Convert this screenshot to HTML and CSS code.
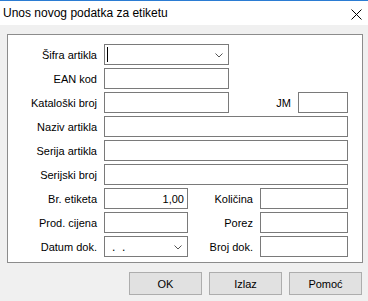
FILE: index.html
```html
<!DOCTYPE html>
<html>
<head>
<meta charset="utf-8">
<link rel="stylesheet" href="styles.css">
</head>
<body>
<div class="window">
  <div class="titlebar">
    <span class="title">Unos novog podatka za etiketu</span>
    <svg class="close" width="11" height="11" viewBox="0 0 11 11"><path d="M0.5 0.5 L10.5 10.5 M10.5 0.5 L0.5 10.5" stroke="#000" stroke-width="1"/></svg>
  </div>
  <div class="content">
    <div class="group">
      <div class="row">
        <label class="lbl">Šifra artikla</label>
        <div class="field w-combo combo"><span class="caret"></span>
          <svg class="chev" width="8" height="5" viewBox="0 0 8 5"><path d="M0.5 0.5 L4 4 L7.5 0.5" fill="none" stroke="#555" stroke-width="1"/></svg>
        </div>
      </div>
      <div class="row">
        <label class="lbl">EAN kod</label>
        <div class="field w-combo"></div>
      </div>
      <div class="row">
        <label class="lbl">Kataloški broj</label>
        <div class="field w-combo"></div>
        <label class="lbl2 l-jm">JM</label>
        <div class="field w-jm"></div>
      </div>
      <div class="row">
        <label class="lbl">Naziv artikla</label>
        <div class="field w-long"></div>
      </div>
      <div class="row">
        <label class="lbl">Serija artikla</label>
        <div class="field w-long"></div>
      </div>
      <div class="row">
        <label class="lbl">Serijski broj</label>
        <div class="field w-long"></div>
      </div>
      <div class="row">
        <label class="lbl">Br. etiketa</label>
        <div class="field w-short num">1,00</div>
        <label class="lbl2 l-mid">Količina</label>
        <div class="field w-mid"></div>
      </div>
      <div class="row">
        <label class="lbl">Prod. cijena</label>
        <div class="field w-short"></div>
        <label class="lbl2 l-mid">Porez</label>
        <div class="field w-mid"></div>
      </div>
      <div class="row">
        <label class="lbl">Datum dok.</label>
        <div class="field w-short combo date"><span class="dots">.&nbsp;&nbsp;.</span>
          <svg class="chev" width="8" height="5" viewBox="0 0 8 5"><path d="M0.5 0.5 L4 4 L7.5 0.5" fill="none" stroke="#555" stroke-width="1"/></svg>
        </div>
        <label class="lbl2 l-mid">Broj dok.</label>
        <div class="field w-mid"></div>
      </div>
    </div>
    <div class="buttons">
      <button class="btn">OK</button>
      <button class="btn">Izlaz</button>
      <button class="btn">Pomoć</button>
    </div>
  </div>
</div>
</body>
</html>
```

FILE: styles.css
```css
* { box-sizing: border-box; }
html, body { margin: 0; padding: 0; }
body { width: 368px; height: 301px; overflow: hidden; background: #f0f0f0; }
.window { width: 368px; height: 301px; background: #f0f0f0; display: flex; flex-direction: column; }
.titlebar {
  height: 25px; background: #fff; border-top: 1px solid #2b7cd3;
  display: flex; align-items: center; justify-content: space-between;
  padding: 0 6px 0 3px;
}
.title { font-family: "Liberation Sans", Arial, sans-serif; font-size: 12px; color: #000; }
.close { display: block; margin-top: 2px; }
.content { padding: 9px 0 0 7px; }
.group {
  width: 356px; height: 229px; background: #fff; border: 1px solid #8c8c8c;
  padding-top: 9px; display: flex; flex-direction: column; gap: 3px;
}
.row { display: flex; align-items: center; height: 21px; }
.lbl, .lbl2 {
  font-family: "Liberation Sans", Tahoma, sans-serif; font-size: 11px; color: #000;
  text-align: right; flex: none;
}
.lbl { width: 89px; margin-right: 7px; }
.lbl2 { margin-right: 7px; }
.l-jm { width: 62px; }
.l-mid { width: 65px; }
.field {
  height: 21px; border: 1px solid #7a7a7a; background: #fff; flex: none;
  font-family: "Liberation Sans", Tahoma, sans-serif; font-size: 11px; color: #000;
  position: relative; display: flex; align-items: center;
}
.w-combo { width: 125px; }
.w-long { width: 244px; }
.w-jm { width: 50px; }
.w-short { width: 84px; }
.w-mid { width: 88px; }
.num { justify-content: flex-end; padding-right: 3px; }
.caret { width: 1px; height: 15px; background: #000; margin-left: 2px; }
.chev { position: absolute; right: 5px; top: 8px; }
.dots { margin-left: 7px; font-size: 12px; }
.buttons { display: flex; justify-content: flex-end; gap: 7px; margin-top: 9px; width: 355px; }
.btn {
  width: 73px; height: 23px; background: #e1e1e1; border: 1px solid #adadad;
  font-family: "Liberation Sans", Tahoma, sans-serif; font-size: 11px; color: #000;
  padding: 0; margin: 0;
}
```
